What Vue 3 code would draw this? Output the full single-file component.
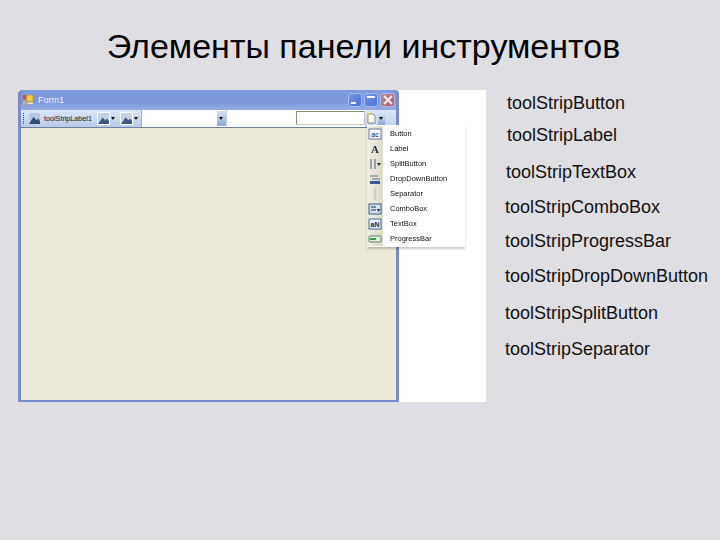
<script setup>
const labels = [
  { text: 'toolStripButton', top: 0, left: 21 },
  { text: 'toolStripLabel', top: 6, left: 21 },
  { text: 'toolStripTextBox', top: 11, left: 20 },
  { text: 'toolStripComboBox', top: 9, left: 19 },
  { text: 'toolStripProgressBar', top: 8, left: 19 },
  { text: 'toolStripDropDownButton', top: 9, left: 19 },
  { text: 'toolStripSplitButton', top: 11, left: 19 },
  { text: 'toolStripSeparator', top: 10, left: 19 }
]
const items = ['Button', 'Label', 'SplitButton', 'DropDownButton', 'Separator', 'ComboBox', 'TextBox', 'ProgressBar']
</script>

<template>
  <div class="page">
    <h1 class="title">Элементы панели инструментов</h1>
    <div class="stage">
      <div class="shot">
        <div class="window">
          <div class="titlebar">
            <svg class="appicon" viewBox="0 0 11 11" width="10" height="10">
              <rect x="0" y="0" width="4" height="5" fill="#d8503a" />
              <rect x="0" y="6" width="4" height="5" fill="#c8b070" />
              <rect x="4" y="0" width="7" height="7" fill="#f2cf4a" stroke="#c89a30" stroke-width="1" />
              <rect x="5" y="8" width="6" height="2" fill="#e8e2c8" />
            </svg>
            <span class="caption">Form1</span>
            <span class="spacer"></span>
            <span class="winbtn blue"><i class="bar low"></i></span>
            <span class="winbtn blue"><i class="bar high"></i></span>
            <span class="winbtn red">
              <svg viewBox="0 0 10 10" width="10" height="10"><path d="M1 1 9 9M9 1 1 9" stroke="#f4e8e8" stroke-width="2" /></svg>
            </span>
          </div>
          <div class="toolbar">
            <div class="strip">
              <span class="grip"></span>
              <svg class="pic" viewBox="0 0 12 12" width="11" height="11"><rect width="12" height="12" fill="#b8c8e4" /><path d="M0 12 5 4l3 4 2-2 2 3v3z" fill="#35506f" /></svg>
              <span class="striplabel">toolStripLabel1</span>
              <svg class="pic framed" viewBox="0 0 12 12" width="11" height="11"><rect width="12" height="12" fill="#c4d2ea" /><path d="M0 12 5 5l3 3 2-2 2 3v3z" fill="#3d5a7c" /></svg>
              <i class="caret gap"></i>
              <svg class="pic framed" viewBox="0 0 12 12" width="11" height="11"><rect width="12" height="12" fill="#c4d2ea" /><path d="M0 12 5 5l3 3 2-2 2 3v3z" fill="#3d5a7c" /></svg>
              <i class="caret"></i>
            </div>
            <div class="combo"><span class="combobtn"><i class="caret"></i></span></div>
            <span class="flexgap"></span>
            <div class="textbox"></div>
            <div class="adder">
              <svg viewBox="0 0 9 11" width="9" height="11"><path d="M1 1h5l2 2v7H1z" fill="#fff" stroke="#8a8a70" /><path d="M0 0h3v2H0z" fill="#efc93e" /></svg>
              <span class="combobtn small"><i class="caret"></i></span>
            </div>
          </div>
          <div class="client"></div>
          <div class="menu">
            <div v-for="(item, i) in items" :key="item" class="menuitem">
              <span class="gutter">
                <svg viewBox="0 0 14 12" width="14" height="12">
                  <template v-if="i === 0"><rect x="1" y="1" width="12" height="10" fill="#f4f6fc" stroke="#6a7aa8" /><text x="7" y="9" font-size="7" text-anchor="middle" fill="#222" font-family="Liberation Sans">ac</text></template>
                  <text v-else-if="i === 1" x="7" y="10" font-size="11" font-weight="700" text-anchor="middle" fill="#1c2a3a" font-family="Liberation Serif">A</text>
                  <template v-else-if="i === 2"><path d="M3 1v10M7 1v10" stroke="#4a5a80" /><path d="M9 5h4l-2 3z" fill="#223" /></template>
                  <template v-else-if="i === 3"><path d="M2 3h8M4 6h8" stroke="#5a6a8a" /><rect x="2" y="8" width="10" height="3" fill="#3c5a90" /></template>
                  <path v-else-if="i === 4" d="M7 0v12" stroke="#b6b6a8" />
                  <template v-else-if="i === 5"><rect x="1" y="1" width="12" height="10" fill="#d8e2f0" stroke="#3a5a80" /><path d="M3 4h5M3 7h5" stroke="#234" /><path d="M9 6h3l-1.500 3z" fill="#123" /></template>
                  <template v-else-if="i === 6"><rect x="1" y="1" width="12" height="10" fill="#e8eef8" stroke="#4a6a90" /><text x="7" y="9" font-size="7" font-weight="700" text-anchor="middle" fill="#1a2a40" font-family="Liberation Sans">aN</text></template>
                  <template v-else><rect x="1" y="3" width="12" height="6" rx="1" fill="#e8f0e8" stroke="#5a7a6a" /><rect x="2" y="5" width="6" height="2" fill="#3aa048" /></template>
                </svg>
              </span>
              <span class="menutext">{{ item }}</span>
            </div>
          </div>
        </div>
      </div>
      <ul class="labels">
        <li
          v-for="label in labels"
          :key="label.text"
          class="label"
          :style="{ marginTop: label.top + 'px', marginLeft: label.left + 'px' }"
        >{{ label.text }}</li>
      </ul>
    </div>
  </div>
</template>

<style>
html, body { margin: 0; }
</style>

<style scoped>
.page {
  width: 720px;
  height: 540px;
  overflow: hidden;
  background: #dfdee3;
  font-family: "Liberation Sans", Arial, sans-serif;
  color: #000;
}
.title {
  margin: 0;
  padding: 26px 0 0 7px;
  height: 90px;
  box-sizing: border-box;
  text-align: center;
  font-size: 34px;
  line-height: 40px;
  font-weight: 400;
}
.stage { display: flex; align-items: flex-start; }
.shot {
  margin-left: 18px;
  width: 468px;
  height: 312px;
  background: #fff;
}
.window {
  position: relative;
  width: 381px;
  height: 312px;
  box-sizing: border-box;
  display: flex;
  flex-direction: column;
  border: 3px solid #7b8acb;
  border-top: 0;
  border-bottom-width: 2px;
  border-radius: 4px 4px 0 0;
  background: #7b8acb;
  filter: blur(0.3px);
}
.titlebar {
  height: 20px;
  display: flex;
  align-items: center;
  gap: 1px;
  padding: 0 1px 0 2px;
  background: linear-gradient(#7f9ade, #7d97dc 60%, #95abe4);
}
.appicon { margin-right: 4px; }
.caption { font-size: 9px; color: #eef2fb; }
.spacer { flex: 1; }
.winbtn {
  position: relative;
  width: 12px;
  height: 12px;
  margin-left: 1px;
  border: 1px solid #a9bcec;
  border-radius: 3px;
  display: flex;
  align-items: center;
  justify-content: center;
}
.winbtn.blue { background: linear-gradient(135deg, #7397e2, #4a72d4); }
.winbtn.red { width: 13px; background: linear-gradient(135deg, #c48a98, #ae5a66); }
.bar { position: absolute; left: 2px; width: 5px; height: 2px; background: #f4f6fc; }
.bar.low { bottom: 2px; }
.bar.high { top: 2px; width: 8px; }
.toolbar {
  height: 17px;
  display: flex;
  align-items: stretch;
  background: #fff;
  border-bottom: 1px solid #6f7f9c;
}
.strip {
  width: 121px;
  box-sizing: border-box;
  display: flex;
  align-items: center;
  padding: 0 0 0 2px;
  background: linear-gradient(#dbe5f6, #b9cbea);
  border-right: 1px solid #9ab0d4;
}
.grip { width: 1px; height: 11px; margin-right: 4px; border-left: 1px dotted #33415c; }
.pic { flex: none; }
.striplabel { width: 54px; margin-left: 4px; flex: none; font-size: 7.200px; color: #11161f; white-space: nowrap; }
.framed { outline: 1px solid #fff; }
.caret { display: block; width: 0; height: 0; border: 2.500px solid transparent; border-top: 3px solid #111; border-bottom: 0; margin-left: 2px; }
.caret.gap { margin: 0 6px 0 2px; }
.combo {
  width: 85px;
  box-sizing: border-box;
  display: flex;
  justify-content: flex-end;
  align-items: center;
  border-right: 1px solid #c8d4ea;
}
.combobtn {
  width: 9px;
  height: 15px;
  display: flex;
  align-items: center;
  background: linear-gradient(#d8e2f2, #8ea8d0);
}
.combobtn .caret { margin-left: 2px; }
.combobtn.small { height: 12px; width: 7px; margin-left: 2px; }
.combobtn.small .caret { margin-left: 1px; }
.flexgap { width: 69px; }
.textbox {
  width: 69px;
  height: 14px;
  margin-top: 1px;
  box-sizing: border-box;
  background: #fff;
  border: 1px solid #8f9186;
  border-bottom-color: #c8c8c0;
  border-right-color: #c8c8c0;
}
.adder {
  flex: 1;
  display: flex;
  align-items: center;
  padding-left: 2px;
  background: linear-gradient(#dbe5f6, #c2d2ee);
}
.client { flex: 1; background: #ebe8d8; }
.menu {
  position: absolute;
  left: 346px;
  top: 35px;
  width: 98px;
  height: 122px;
  display: flex;
  flex-direction: column;
  padding: 1px 0;
  box-sizing: border-box;
  background: #fff;
  box-shadow: 0 2px 2px rgba(0, 0, 0, .2);
}
.menuitem { flex: 1; display: flex; align-items: center; }
.gutter {
  width: 16px;
  align-self: stretch;
  display: flex;
  align-items: center;
  justify-content: center;
  background: linear-gradient(90deg, #f2f0e6, #dcdac8);
}
.menutext { margin-left: 7px; font-size: 7.500px; color: #111; white-space: nowrap; }
.labels { list-style: none; margin: 0; padding: 0; }
.label { font-size: 18px; line-height: 26px; white-space: nowrap; color: #111; }
</style>
